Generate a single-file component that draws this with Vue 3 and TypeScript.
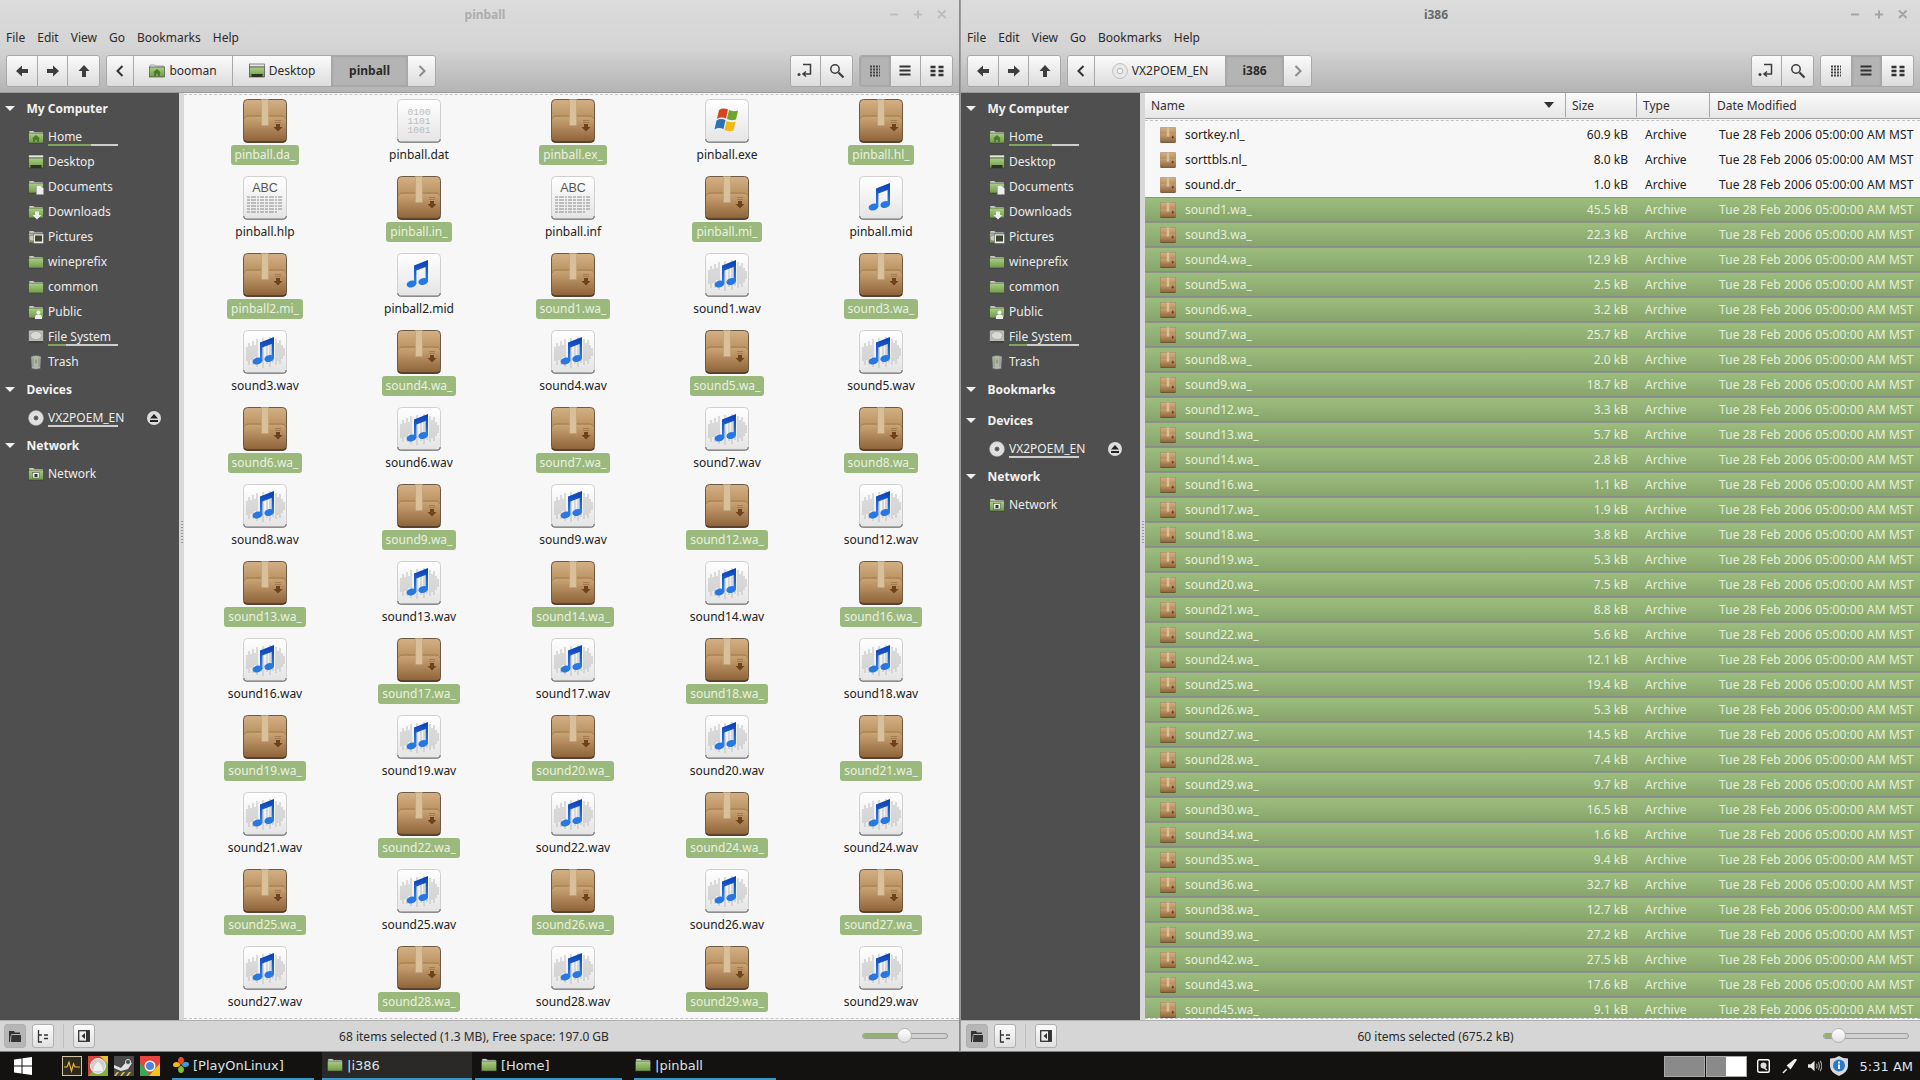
<script setup lang="ts">
interface SideItem { name: string; icon: string; usage?: number; eject?: boolean }
interface Section { title: string; items: SideItem[] }
interface Crumb { label: string; icon?: string; width: number; active?: boolean }
interface Win {
  key: string; title: string; mode: 'grid' | 'list'; crumbs: Crumb[]; sections: Section[];
  status: string; zoom: number
}

const computer: SideItem[] = [
  { name: 'Home', icon: 'f-home', usage: 61 },
  { name: 'Desktop', icon: 'f-desk' },
  { name: 'Documents', icon: 'f-docs' },
  { name: 'Downloads', icon: 'f-down' },
  { name: 'Pictures', icon: 'f-pics' },
  { name: 'wineprefix', icon: 'f-plain' },
  { name: 'common', icon: 'f-plain' },
  { name: 'Public', icon: 'f-pub' },
  { name: 'File System', icon: 'i-hdd', usage: 25 },
  { name: 'Trash', icon: 'i-trash' }
]
const devices: Section = { title: 'Devices', items: [{ name: 'VX2POEM_EN', icon: 'i-disc', usage: 0, eject: true }] }
const network: Section = { title: 'Network', items: [{ name: 'Network', icon: 'f-net' }] }

const windows: Win[] = [
  {
    key: 'left', title: 'pinball', mode: 'grid', status: '68 items selected (1.3 MB), Free space: 197.0 GB', zoom: 50,
    crumbs: [
      { label: 'booman', icon: 'f-home', width: 99 },
      { label: 'Desktop', icon: 'f-desk', width: 99 },
      { label: 'pinball', width: 76, active: true }
    ],
    sections: [{ title: 'My Computer', items: computer }, devices, network]
  },
  {
    key: 'right', title: 'i386', mode: 'list', status: '60 items selected (675.2 kB)', zoom: 18,
    crumbs: [
      { label: 'VX2POEM_EN', icon: 'i-disc2', width: 131 },
      { label: 'i386', width: 58, active: true }
    ],
    sections: [{ title: 'My Computer', items: computer }, { title: 'Bookmarks', items: [] }, devices, network]
  }
]

const menu = ['File', 'Edit', 'View', 'Go', 'Bookmarks', 'Help']

const nums = [1, 3, 4, 5, 6, 7, 8, 9, 12, 13, 14, 16, 17, 18, 19, 20, 21, 22, 24, 25, 26, 27, 28, 29]
const gridFiles: { name: string; icon: string; sel: boolean }[] = [
  { name: 'pinball.da_', icon: 'pkg', sel: true },
  { name: 'pinball.dat', icon: 'bin', sel: false },
  { name: 'pinball.ex_', icon: 'pkg', sel: true },
  { name: 'pinball.exe', icon: 'exe', sel: false },
  { name: 'pinball.hl_', icon: 'pkg', sel: true },
  { name: 'pinball.hlp', icon: 'txt', sel: false },
  { name: 'pinball.in_', icon: 'pkg', sel: true },
  { name: 'pinball.inf', icon: 'txt', sel: false },
  { name: 'pinball.mi_', icon: 'pkg', sel: true },
  { name: 'pinball.mid', icon: 'mid', sel: false },
  { name: 'pinball2.mi_', icon: 'pkg', sel: true },
  { name: 'pinball2.mid', icon: 'mid', sel: false }
]
for (const n of nums) {
  gridFiles.push({ name: `sound${n}.wa_`, icon: 'pkg', sel: true })
  gridFiles.push({ name: `sound${n}.wav`, icon: 'wav', sel: false })
}

const plainRows = [
  { name: 'sortkey.nl_', size: '60.9 kB', sel: false },
  { name: 'sorttbls.nl_', size: '8.0 kB', sel: false },
  { name: 'sound.dr_', size: '1.0 kB', sel: false }
]
const sel: [number, string][] = [
  [1, '45.5'], [3, '22.3'], [4, '12.9'], [5, '2.5'], [6, '3.2'], [7, '25.7'], [8, '2.0'], [9, '18.7'],
  [12, '3.3'], [13, '5.7'], [14, '2.8'], [16, '1.1'], [17, '1.9'], [18, '3.8'], [19, '5.3'], [20, '7.5'],
  [21, '8.8'], [22, '5.6'], [24, '12.1'], [25, '19.4'], [26, '5.3'], [27, '14.5'], [28, '7.4'], [29, '9.7'],
  [30, '16.5'], [34, '1.6'], [35, '9.4'], [36, '32.7'], [38, '12.7'], [39, '27.2'], [42, '27.5'], [43, '17.6'], [45, '9.1']
]
const rows = [...plainRows, ...sel.map(([n, s]) => ({ name: `sound${n}.wa_`, size: `${s} kB`, sel: true }))]

const tasks = [
  { label: '[PlayOnLinux]', icon: 'clover', width: 142, gap: 0, pad: 0, active: false },
  { label: '|i386', icon: 'folder', width: 150, gap: 8, pad: 4, active: true },
  { label: '[Home]', icon: 'folder', width: 147, gap: 3, pad: 5, active: false },
  { label: '|pinball', icon: 'folder', width: 142, gap: 12, pad: 0, active: false }
]
</script>

<template>
  <div class="screen">
    <svg class="defs" aria-hidden="true">
      <defs>
        <linearGradient id="pkgBody" x1="0" y1="0" x2="0" y2="1">
          <stop offset="0" stop-color="#d3b085" /><stop offset=".38" stop-color="#bd9565" />
          <stop offset=".42" stop-color="#c9a274" /><stop offset="1" stop-color="#8b6036" />
        </linearGradient>
        <linearGradient id="docBody" x1="0" y1="0" x2="0" y2="1">
          <stop offset="0" stop-color="#ffffff" /><stop offset="1" stop-color="#e4e4e4" />
        </linearGradient>
        <linearGradient id="noteBlue" x1="0" y1="0" x2="0" y2="1">
          <stop offset="0" stop-color="#0a3db4" /><stop offset="1" stop-color="#2f84ea" />
        </linearGradient>
        <linearGradient id="fGreen" x1="0" y1="0" x2="0" y2="1">
          <stop offset="0" stop-color="#abd083" /><stop offset="1" stop-color="#6f9a48" />
        </linearGradient>
        <symbol id="pkg" viewBox="0 0 44 44">
          <rect x=".5" y=".5" width="43" height="43" rx="4" fill="url(#pkgBody)" stroke="#6b5a46" />
          <path d="M1 20q1-3 4-3h34q3 0 4 3" fill="none" stroke="#9a7448" stroke-width=".8" />
          <path d="M1 41q1 2 4 2h34q3 0 4-2" fill="none" stroke="#4d3b28" stroke-width="1.4" />
          <rect x="18.5" y=".5" width="7" height="26" fill="#d9c09a" stroke="#bd9f76" stroke-width=".6" />
          <path d="M32 21h6v1h-6zM32 23h6v1h-6z" fill="#a27a4e" />
          <path d="M33 25h4v3h2.500l-4.500 4.500-4.500-4.500h2.500z" fill="#70421c" />
        </symbol>
        <symbol id="doc" viewBox="0 0 44 44">
          <rect x=".5" y=".5" width="43" height="43" rx="4" fill="url(#docBody)" stroke="#d0d0d0" />
          <path d="M.8 40q0 3.200 3.700 3.200h35q3.700 0 3.700-3.200" fill="none" stroke="#777" stroke-width="1.200" />
        </symbol>
        <symbol id="bin" viewBox="0 0 44 44">
          <use href="#doc" width="44" height="44" />
          <text x="22" y="15.500" text-anchor="middle" font-family="Liberation Mono" font-size="9.600" fill="#bdbdbd">0100</text>
          <text x="22" y="24.500" text-anchor="middle" font-family="Liberation Mono" font-size="9.600" fill="#bdbdbd">1101</text>
          <text x="22" y="33.500" text-anchor="middle" font-family="Liberation Mono" font-size="9.600" fill="#bdbdbd">1001</text>
        </symbol>
        <symbol id="txt" viewBox="0 0 44 44">
          <use href="#doc" width="44" height="44" />
          <text x="22" y="16" text-anchor="middle" font-family="Liberation Sans" font-size="12.500" fill="#555">ABC</text>
          <path d="M4 21h36M4 24h36M4 27h36M4 30h36M4 33h36M4 36h30" stroke="#8a8a8a" stroke-width="1" stroke-dasharray="3 1 5 1 2 1 4 1" />
        </symbol>
        <symbol id="exe" viewBox="0 0 44 44">
          <use href="#doc" width="44" height="44" />
          <path d="M14 11q4-2.500 9-.500l-2 9q-5-2-9 .5z" fill="#d9431e" />
          <path d="M24 11q4 2 9 .5l-2 9q-5 1.500-9-.5z" fill="#6fa52b" />
          <path d="M11.500 21.500q4-2.500 9-.500l-2 9q-5-2-9 .5z" fill="#2c73b4" />
          <path d="M21.500 22q4 2 9 .5l-2 9q-5 1.500-9-.5z" fill="#f5b914" />
        </symbol>
        <symbol id="note" viewBox="0 0 44 44">
          <path d="M17 12.500 31 7v21.500h-2.400V14l-9.200 3.500V31H17z" fill="url(#noteBlue)" />
          <ellipse cx="14.500" cy="31" rx="4.900" ry="3.400" transform="rotate(-14 14.500 31)" fill="#2778e2" />
          <ellipse cx="26.200" cy="28.500" rx="4.900" ry="3.400" transform="rotate(-14 26.200 28.500)" fill="#2778e2" />
        </symbol>
        <symbol id="mid" viewBox="0 0 44 44">
          <use href="#doc" width="44" height="44" />
          <use href="#note" width="44" height="44" />
        </symbol>
        <symbol id="wav" viewBox="0 0 44 44">
          <use href="#doc" width="44" height="44" />
          <path d="M4 17v14M6 13v22M8 16v14M10 11v24M12 15v12M14 9v28M18 12v20M20 8v30M24 10v24M27 7v30M30 11v22M33 9v26M35 13v18M37 10v24M39 15v14M41 18v8" stroke="#bdbdbd" stroke-width="1" fill="none" />
          <use href="#note" width="44" height="44" />
        </symbol>

        <symbol id="f-plain" viewBox="0 0 16 16">
          <path d="M1 3.500V2.500q0-.5.500-.5h4l1 1h8q.5 0 .5.500v1H1z" fill="#eee" stroke="#555" stroke-width=".5" />
          <rect x=".5" y="4" width="15" height="10" fill="url(#fGreen)" stroke="#3a3a3a" stroke-width=".6" />
        </symbol>
        <symbol id="f-home" viewBox="0 0 16 16">
          <use href="#f-plain" width="16" height="16" />
          <path d="M8 6 4 9.500h1V13h2v-2h2v2h2V9.500h1z" fill="#4f7a2e" />
        </symbol>
        <symbol id="f-desk" viewBox="0 0 16 16">
          <rect x=".5" y="1" width="15" height="3" fill="#e8e8e8" stroke="#444" stroke-width=".6" />
          <rect x=".5" y="4" width="15" height="10" fill="url(#fGreen)" stroke="#333" stroke-width=".6" />
          <rect x="2.500" y="11" width="11" height="3" fill="#2c3322" />
        </symbol>
        <symbol id="f-docs" viewBox="0 0 16 16">
          <use href="#f-plain" width="16" height="16" />
          <path d="M8.500 6.500h4l3 3v6h-7z" fill="#eee" stroke="#999" stroke-width=".5" />
        </symbol>
        <symbol id="f-down" viewBox="0 0 16 16">
          <use href="#f-plain" width="16" height="16" />
          <path d="M7 7.500h4V11h2.500L9 15.500 4.500 11H7z" fill="#eee" />
        </symbol>
        <symbol id="f-pics" viewBox="0 0 16 16">
          <use href="#f-plain" width="16" height="16" />
          <circle cx="4" cy="9" r="3" fill="#c9c9c9" stroke="#666" stroke-width=".5" />
          <rect x="5.500" y="5" width="10" height="9.500" fill="#eee" stroke="#555" stroke-width=".5" />
          <rect x="7" y="6.500" width="7" height="6" fill="#3e4630" />
        </symbol>
        <symbol id="f-pub" viewBox="0 0 16 16">
          <use href="#f-plain" width="16" height="16" />
          <circle cx="10.500" cy="8.500" r="2" fill="#eee" />
          <path d="M7 15v-2q0-2.500 3.500-2.500T14 13v2z" fill="#eee" />
        </symbol>
        <symbol id="f-net" viewBox="0 0 16 16">
          <use href="#f-plain" width="16" height="16" />
          <rect x="4.500" y="6.500" width="7" height="5.500" fill="#eee" stroke="#444" stroke-width=".5" />
          <rect x="6.500" y="8" width="3" height="3" fill="#333" />
        </symbol>
        <symbol id="i-hdd" viewBox="0 0 16 16">
          <rect x=".5" y="1" width="15" height="13.500" rx="1.500" fill="#b8bab4" stroke="#444" stroke-width=".6" />
          <ellipse cx="8" cy="6.500" rx="5.500" ry="4" fill="#d9d9d6" stroke="#999" stroke-width=".5" />
          <rect x="1" y="12" width="14" height="2.500" fill="#3f3f3f" />
        </symbol>
        <symbol id="i-trash" viewBox="0 0 16 16">
          <path d="M3 2.500q5-2 10 0l-.7 12q-4.300 1.500-8.600 0z" fill="#b4b6b0" stroke="#5f5f5f" stroke-width=".5" />
          <path d="M5 4v9M11 4v9" stroke="#8c8c8c" stroke-width="1" />
          <path d="M8 5.500v4" stroke="#7fae4f" stroke-width="2" />
        </symbol>
        <symbol id="i-disc" viewBox="0 0 16 16">
          <circle cx="8" cy="8" r="7.500" fill="#dedede" stroke="#a5a5a5" stroke-width=".5" />
          <circle cx="8" cy="8" r="3.200" fill="#777" stroke="#fff" stroke-width="1" />
          <circle cx="8" cy="8" r="1.400" fill="#4f4f4f" />
        </symbol>
        <symbol id="i-disc2" viewBox="0 0 16 16">
          <circle cx="8" cy="8" r="7.500" fill="#e8e8e8" stroke="#a5a5a5" stroke-width=".6" />
          <circle cx="8" cy="8" r="2.700" fill="#f5f5f5" stroke="#999" stroke-width=".7" />
        </symbol>
      </defs>
    </svg>

    <div class="desktop">
      <section v-for="w in windows" :key="w.key" class="window" :class="w.key">
        <header class="head">
          <div class="titlebar">
            <span class="title">{{ w.title }}</span>
            <svg class="controls" width="66" height="12" viewBox="0 0 66 12">
              <path d="M2 6.500h8M26 6.500h8M30 2.500v8M50 2.500l7.500 7.500M57.500 2.500 50 10" fill="none" stroke-width="2" />
            </svg>
          </div>
          <nav class="menubar"><span v-for="m in menu" :key="m" class="menuitem">{{ m }}</span></nav>
          <div class="toolbar">
            <div class="group">
              <button class="btn nav"><svg width="14" height="14" viewBox="0 0 14 14"><path d="M1 7l6-5.500V5h6v4H7v3.500z" fill="#3d3d3d" /></svg></button>
              <button class="btn nav"><svg width="14" height="14" viewBox="0 0 14 14"><path d="M13 7 7 1.500V5H1v4h6v3.500z" fill="#3d3d3d" /></svg></button>
              <button class="btn nav"><svg width="14" height="14" viewBox="0 0 14 14"><path d="M7 1 1.500 7H5v6h4V7h3.500z" fill="#3d3d3d" /></svg></button>
            </div>
            <div class="group path">
              <button class="btn arrow"><svg width="10" height="12" viewBox="0 0 10 12"><path d="M7.500 1 2.500 6l5 5" fill="none" stroke="#333" stroke-width="2" /></svg></button>
              <button v-for="c in w.crumbs" :key="c.label" class="btn crumb" :class="{ on: c.active }" :style="{ width: c.width + 'px' }">
                <svg v-if="c.icon" class="crumbicon" width="16" height="16"><use :href="'#' + c.icon" width="16" height="16" /></svg>
                <span>{{ c.label }}</span>
              </button>
              <button class="btn arrow"><svg width="10" height="12" viewBox="0 0 10 12"><path d="M2.500 1l5 5-5 5" fill="none" stroke="#8c8c8c" stroke-width="2" /></svg></button>
            </div>
            <div class="spacer"></div>
            <div class="group">
              <button class="btn nav"><svg width="16" height="16" viewBox="0 0 16 16"><path d="M6 1.500h7.500V11H6M9 8.500 6 11l3 2.500" fill="none" stroke="#3d3d3d" stroke-width="1.500" /><circle cx="2" cy="11.500" r="1.500" fill="#3d3d3d" /></svg></button>
              <button class="btn nav"><svg width="16" height="16" viewBox="0 0 16 16"><circle cx="6" cy="6" r="4.200" fill="none" stroke="#3d3d3d" stroke-width="1.500" /><path d="m9.500 9.500 5 5" stroke="#3d3d3d" stroke-width="2.200" /></svg></button>
            </div>
            <div class="group views">
              <button class="btn nav" :class="{ on: w.mode === 'grid' }"><svg width="12" height="12" viewBox="0 0 12 12"><path d="M1 1.500h10M1 4.500h10M1 7.500h10M1 10.500h10" stroke="#444" stroke-width="2" stroke-dasharray="2 1" fill="none" /></svg></button>
              <button class="btn nav" :class="{ on: w.mode === 'list' }"><svg width="12" height="12" viewBox="0 0 12 12"><path d="M.500 1.500h11M.500 5.500h11M.500 9.500h11" stroke="#333" stroke-width="2" fill="none" /></svg></button>
              <button class="btn nav"><svg width="14" height="12" viewBox="0 0 14 12"><path d="M1 2h5M9 2h5M1 6h5M9 6h5M1 10h5M9 10h5" transform="translate(-.5 0)" stroke="#333" stroke-width="2.400" fill="none" /></svg></button>
            </div>
          </div>
        </header>

        <div class="body">
          <aside class="sidebar">
            <div v-for="s in w.sections" :key="s.title" class="section">
              <h3 class="heading"><i class="tri"></i>{{ s.title }}</h3>
              <ul class="items">
                <li v-for="it in s.items" :key="it.name" class="item">
                  <svg class="sideicon" width="16" height="16"><use :href="'#' + it.icon" width="16" height="16" /></svg>
                  <span class="name">{{ it.name }}
                    <span v-if="it.usage !== undefined" class="usage"><b :style="{ width: it.usage + '%' }"></b></span>
                  </span>
                  <svg v-if="it.eject" class="eject" width="14" height="14" viewBox="0 0 14 14">
                    <circle cx="7" cy="7" r="7" fill="#dcdcdc" /><path d="M7 3l4 4.500H3zM3 9h8v2H3z" fill="#222" />
                  </svg>
                </li>
              </ul>
            </div>
          </aside>
          <div class="handle"><i></i></div>

          <main v-if="w.mode === 'grid'" class="content">
            <div class="dashed gridwrap">
              <div v-for="f in gridFiles" :key="f.name" class="cell">
                <svg width="44" height="44"><use :href="'#' + f.icon" width="44" height="44" /></svg>
                <span class="label" :class="{ sel: f.sel }">{{ f.name }}</span>
              </div>
            </div>
          </main>

          <main v-else class="content">
            <div class="columns">
              <span class="col c-name">Name<svg class="sort" width="12" height="6" viewBox="0 0 12 6"><path d="M1 0h10L6 6z" fill="#333" /></svg></span>
              <span class="col c-size">Size</span>
              <span class="col c-type">Type</span>
              <span class="col c-date">Date Modified</span>
            </div>
            <div class="dashed listwrap">
              <div v-for="r in rows" :key="r.name" class="row" :class="{ sel: r.sel }">
                <span class="r-name"><svg width="16" height="16"><use href="#pkg" width="16" height="16" /></svg>{{ r.name }}</span>
                <span class="r-size">{{ r.size }}</span>
                <span class="r-type">Archive</span>
                <span class="r-date">Tue 28 Feb 2006 05:00:00 AM MST</span>
              </div>
            </div>
          </main>
        </div>

        <footer class="status">
          <button class="sbtn on"><svg width="12" height="11" viewBox="0 0 12 11"><path d="M0 0h5l1 1.500h5V3H2.500L1.500 5 1 11H0zM2.500 4H12v7H2z" fill="#333" /></svg></button>
          <button class="sbtn"><svg width="12" height="13" viewBox="0 0 12 13"><path d="M1.500 0v12H5M1.500 5H5M7 5h4M7 8.500h4" fill="none" stroke="#333" stroke-width="1.300" /></svg></button>
          <i class="sep"></i>
          <button class="sbtn"><svg width="12" height="12" viewBox="0 0 12 12"><rect x=".7" y=".7" width="10.600" height="10.600" fill="none" stroke="#333" stroke-width="1.300" /><path d="M7 3v6L3.500 6zM8 1h3v10H8z" fill="#333" /></svg></button>
          <span class="statustext">{{ w.status }}</span>
          <div class="slider">
            <div class="fill" :style="{ width: w.zoom + '%' }"></div>
            <div class="knob" :style="{ left: w.zoom + '%' }"></div>
          </div>
        </footer>
      </section>
    </div>

    <div class="taskbar">
      <svg class="start" width="18" height="18" viewBox="0 0 18 18"><path d="M0 2.500 7.500 1.400v7H0zM8.500 1.300 18 0v8.400H8.500zM0 9.500h7.500v7L0 15.500zM8.500 9.500H18V18l-9.500-1.300z" fill="#fff" /></svg>
      <div class="launchers">
        <svg width="20" height="20" viewBox="0 0 20 20"><rect x=".5" y=".5" width="19" height="19" fill="#2f2a1c" stroke="#cfc7a8" /><path d="M2 11h3l2-5 2.500 9 2-7 1.500 3h5" fill="none" stroke="#e7b43a" stroke-width="1.200" /></svg>
        <svg width="20" height="20" viewBox="0 0 20 20"><rect width="20" height="20" fill="#d5483f" /><path d="M0 20 20 0v20z" fill="#7fb13c" /><path d="M20 0v8L12 0z" fill="#e7c33b" /><circle cx="10" cy="10" r="7.500" fill="#cfcfcf" stroke="#eee" /><path d="M5 15q1-7 5-9 4 2 5 9z" fill="#eee" /></svg>
        <svg width="20" height="20" viewBox="0 0 20 20"><rect width="20" height="20" rx="1" fill="#4a4a4a" /><path d="M0 9l7 3 6-7 5 2-4 6-7 2-7-3z" fill="#e2e2e2" /><circle cx="14" cy="6" r="2.500" fill="#4a4a4a" stroke="#e2e2e2" /><path d="M0 20l3-4h2l-3 4zM6 20l3-4h2l-3 4zM12 20l3-4h2l-3 4z" fill="#e4c438" /></svg>
        <svg width="20" height="20" viewBox="0 0 20 20"><rect width="20" height="20" fill="#e8453c" /><path d="M0 7v13h11z" fill="#3aa757" /><path d="M20 7v13H9z" fill="#f5c518" /><circle cx="10" cy="10" r="5.500" fill="#fff" /><circle cx="10" cy="10" r="4" fill="#4a86e0" /></svg>
      </div>
      <div v-for="t in tasks" :key="t.label" class="task" :class="{ active: t.active }" :style="{ width: t.width + 'px', marginLeft: t.gap + 'px', paddingLeft: t.pad + 'px' }">
        <svg v-if="t.icon === 'clover'" width="18" height="18" viewBox="0 0 18 18"><path d="M9 1q3 0 3 4 0 2-3 3.500Q6 7 6 5q0-4 3-4z" fill="#e64b2a" /><path d="M17 8q0 3-4 3-2 0-3.500-2.500Q11 6 13 6q4-.5 4 2z" fill="#3f9be0" /><path d="M9 17q-3 0-3-4 0-2 3-3.500Q12 11 12 13q0 4-3 4z" fill="#7fbf34" /><path d="M1 9q0-3 4-3 2 0 3.500 3Q7 11 5 11q-4 .5-4-2z" fill="#f2b81e" /></svg>
        <svg v-else width="18" height="16" viewBox="0 0 16 16"><use href="#f-plain" width="16" height="16" /></svg>
        <span>{{ t.label }}</span>
      </div>
      <div class="tray">
        <i class="pager one"></i>
        <i class="pager two"><b></b></i>
        <svg class="t-hdd" width="13" height="14" viewBox="0 0 13 14"><rect x=".7" y=".7" width="11.600" height="12.600" rx="1.500" fill="#111" stroke="#fff" stroke-width="1.400" /><circle cx="6.500" cy="6.500" r="3" fill="#ddd" /><path d="M6 8l4 3" stroke="#ddd" stroke-width="1.500" /></svg>
        <svg class="t-pen" width="15" height="15" viewBox="0 0 16 16"><path d="M1 15l4-4M6 7l3 3 6-9-1-.5z" stroke="#eee" stroke-width="1.500" fill="#eee" /></svg>
        <svg class="t-vol" width="14" height="14" viewBox="0 0 15 14"><path d="M0 5h3l4-3.500v11L3 9H0z" fill="#e6e6e6" /><path d="M9 4.500q1.500 2.500 0 5M11 3q2.500 4 0 8M13 1.500q3.500 5.500 0 11" fill="none" stroke="#aaa" stroke-width="1.100" /></svg>
        <svg class="t-shield" width="18" height="20" viewBox="0 0 18 20"><path d="M9 0q4 2.500 9 2.500V10q0 6-9 10-9-4-9-10V2.500Q5 2.500 9 0z" fill="#d6dbe0" /><circle cx="9" cy="9.500" r="6" fill="#2b79c6" /><path d="M8 8.500h2V13H8zM8 5.500h2v2H8z" fill="#fff" /></svg>
        <span class="clock">5:31 AM</span>
      </div>
    </div>
  </div>
</template>

<style scoped>
.screen { width: 1920px; height: 1080px; overflow: hidden; display: flex; flex-direction: column; background: #141210; font-family: "Noto Sans", sans-serif; font-size: 12px; color: #2b2b2b; }
.defs { display: block; width: 0; height: 0; }
.desktop { display: flex; height: 1052px; }
.window { width: 960px; height: 1052px; display: flex; flex-direction: column; box-sizing: border-box; background: #d6d6d6; border-bottom: 1px solid #7f7f7f; }
.window.left { border-right: 1px solid #8a8a8a; }
.window.right { border-left: 1px solid #9a9a9a; }

.head { height: 93px; box-sizing: border-box; border-bottom: 1px solid #9a9a9a; background: linear-gradient(#dcdcdc 0, #d4d4d4 52%, #b4b4b4 100%); flex: none; }
.titlebar { height: 24px; box-sizing: border-box; padding-top: 4px; display: flex; align-items: center; }
.title { flex: 1; text-align: center; font-weight: 700; }
.left .title { color: #adadad; padding-left: 82px; }
.right .title { color: #6a6a6a; padding-left: 62px; }
.controls { margin-right: 5px; stroke: #bdbdbd; flex: none; }
.right .controls { stroke: #a4a4a4; }
.menubar { height: 26px; display: flex; align-items: center; }
.menuitem { padding: 0 6px; }
.toolbar { height: 42px; display: flex; align-items: flex-start; padding: 5px 6px 0 6px; }
.group { display: flex; height: 32px; box-sizing: border-box; border: 1px solid #a8a8a8; border-radius: 3px; overflow: hidden; }
.path { margin-left: 6px; }
.views { margin-left: 6px; }
.spacer { flex: 1; }
.btn { height: 100%; border: 0; border-right: 1px solid #a8a8a8; padding: 0 0 1px; background: linear-gradient(#fbfbfb, #dcdcdc); display: flex; align-items: center; justify-content: center; font: inherit; color: #2b2b2b; box-sizing: border-box; }
.btn:last-child { border-right: 0; }
.btn.on { background: #b4b4b4; box-shadow: inset 0 0 2px #888; }
.nav { width: 30.700px; }
.arrow { width: 27px; }
.crumb { gap: 4px; flex: none; }
.crumb.on { font-weight: 700; }

.body { flex: 1; display: flex; min-height: 0; }
.sidebar { width: 179px; flex: none; background: #4f4f4f; padding-top: 1px; box-sizing: border-box; color: #ececec; overflow: hidden; }
.section { padding-bottom: 1px; }
.heading { margin: 0 0 2px; height: 28px; display: flex; align-items: center; font-size: 12px; font-weight: 700; color: #f2f2f2; padding-left: 5px; }
.tri { width: 0; height: 0; border-left: 5px solid transparent; border-right: 5px solid transparent; border-top: 5px solid #f0f0f0; margin-right: 11.500px; }
.items { list-style: none; margin: 0; padding: 0; }
.item { height: 25px; display: flex; align-items: center; padding-left: 28px; }
.sideicon { margin-right: 4px; flex: none; }
.name { position: relative; line-height: 25px; flex: none; min-width: 70px; }
.usage { position: absolute; left: 0; top: 20px; width: 70px; height: 2px; background: #cfcfcf; }
.usage b { display: block; height: 100%; background: #7fa35a; }
.eject { margin-left: auto; margin-right: 18px; }

.handle { width: 5px; flex: none; background: #d8d8d8; display: flex; align-items: center; justify-content: center; padding-bottom: 50px; }
.handle i { width: 2px; height: 22px; background: repeating-linear-gradient(#9a9a9a 0 1px, transparent 1px 3px); }
.content { flex: 1; min-width: 0; background: #f7f7f7; display: flex; flex-direction: column; overflow: hidden; }
.dashed { flex: 1; min-height: 0; overflow: hidden; margin: 1px 0; border-top: 1px dashed #c4c4c4; border-bottom: 1px dashed #c4c4c4; }
.gridwrap { display: grid; grid-template-columns: repeat(5, 154px); grid-auto-rows: 77px; padding: 4px 0 0 4px; }
.cell { display: flex; flex-direction: column; align-items: center; }
.cell svg { flex: none; display: block; }
.label { margin-top: 2px; height: 20px; line-height: 19px; padding: 0 4px; border-radius: 3px; color: #222; white-space: nowrap; }
.label.sel { background: #9bb97c; color: #e9f1e0; }

.columns { flex: none; height: 26px; padding-bottom: 1px; display: flex; box-sizing: border-box; background: linear-gradient(#fbfbfb, #e6e6e6); border-bottom: 1px solid #9f9f9f; }
.col { display: flex; align-items: center; border-right: 1px solid #a8a8a8; box-sizing: border-box; padding-left: 6px; color: #2f2f2f; flex: none; }
.c-name { width: 421px; justify-content: space-between; padding-right: 10px; }
.c-size { width: 71px; }
.c-type { width: 73px; }
.c-date { flex: 1; border-right: 0; padding-left: 7px; }
.listwrap { padding-top: 1px; }
.row { height: 25px; display: flex; align-items: center; box-sizing: border-box; color: #222; }
.row.sel { background: linear-gradient(#9dbd7e, #87a56c); color: #e6efdc; border-top: 1px solid #8c948a; border-bottom: 1px solid #8b8b8b; }
.r-name { width: 421px; flex: none; display: flex; align-items: center; padding-left: 15px; gap: 9px; box-sizing: border-box; }
.r-size { width: 71px; flex: none; text-align: right; padding-right: 9px; box-sizing: border-box; }
.r-type { width: 73px; flex: none; padding-left: 8px; box-sizing: border-box; }
.r-date { padding-left: 9px; white-space: nowrap; flex: none; letter-spacing: .12px; }

.status { height: 31px; flex: none; box-sizing: border-box; display: flex; align-items: center; padding-left: 4px; background: #d6d6d6; border-top: 1px solid #b0b0b0; }
.right .status { padding-left: 5px; }
.sbtn { width: 22px; height: 24px; box-sizing: border-box; padding: 0; margin-right: 6px; border: 1px solid #b0b0b0; border-radius: 3px; background: linear-gradient(#fcfcfc, #e0e0e0); display: flex; align-items: center; justify-content: center; }
.sbtn.on { background: #b6b6b6; }
.sep { width: 1px; height: 24px; background: #bdbdbd; margin: 0 9px 0 3px; }
.statustext { flex: 1; text-align: center; padding-right: 15px; }
.slider { position: relative; width: 86px; height: 6px; margin-right: 11px; border: 1px solid #9c9c9c; border-radius: 4px; background: #d0d0d0; box-sizing: border-box; flex: none; }
.fill { height: 100%; background: #93b272; border-radius: 3px 0 0 3px; }
.knob { position: absolute; top: -6px; width: 15px; height: 15px; margin-left: -8px; border-radius: 50%; border: 1px solid #b3b3b3; box-sizing: border-box; background: linear-gradient(#fff, #e0e0e0); }

.taskbar { height: 28px; display: flex; align-items: center; position: relative; font-family: "DejaVu Sans", sans-serif; font-size: 13px; color: #d9e2e8; }
.start { margin-left: 14px; flex: none; }
.launchers { display: flex; gap: 6px; margin-left: 30px; width: 110px; flex: none; }
.launchers svg { flex: none; }
.task { height: 28px; box-sizing: border-box; display: flex; align-items: center; gap: 3px; border-bottom: 2px solid #3a94c4; flex: none; }
.task.active { background: #2a2927; }
.tray { margin-left: auto; display: flex; align-items: center; padding-right: 7px; }
.pager { display: block; width: 41px; height: 21px; box-sizing: border-box; background: #8a8a8a; border: 1px solid #aaa; margin-right: 1px; }
.pager.two { display: flex; justify-content: flex-end; margin-right: 10px; }
.pager.two b { display: block; width: 20px; height: 100%; background: #fff; }
.tray svg { flex: none; }
.t-hdd { margin-right: 12px; }
.t-pen { margin-right: 11px; }
.t-vol { margin-right: 8px; }
.t-shield { margin-right: 12px; }
.clock { white-space: nowrap; }
</style>

<style>
html, body { margin: 0; background: #141210; }
</style>
